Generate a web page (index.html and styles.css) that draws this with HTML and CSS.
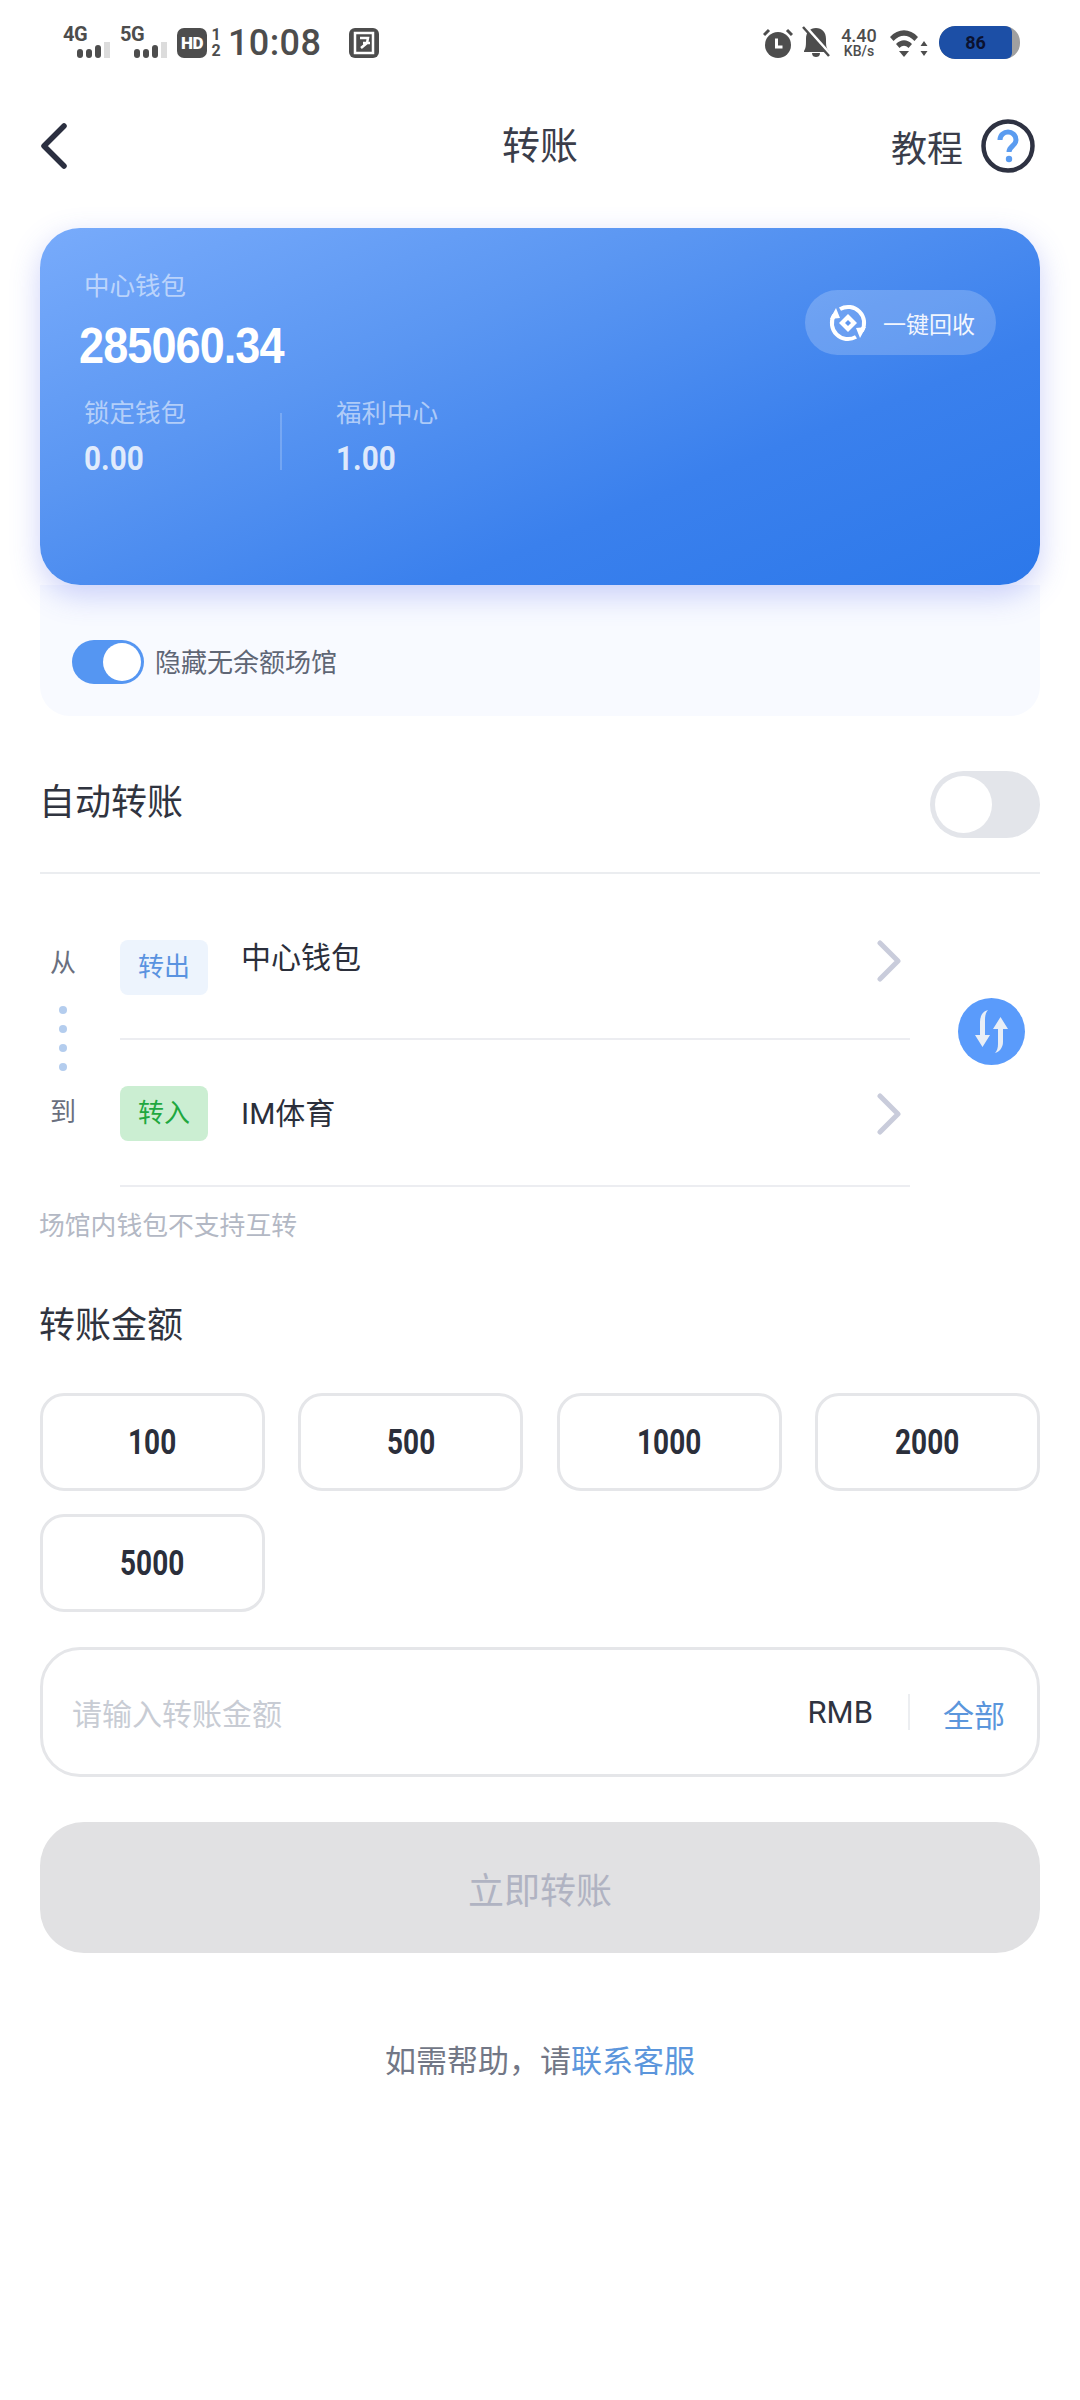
FILE: index.html
```html
<!DOCTYPE html>
<html lang="zh-CN">

<head>
    <meta charset="UTF-8">
    <meta name="viewport" content="width=device-width, initial-scale=1.0">
    <title>转账</title>
    <link rel="stylesheet" href="styles.css">
</head>

<body>
    <!-- status bar -->
    <div class="status">
        <div class="status_left">
            <div class="signal"><span class="signal_name">4G</span><span class="bars"><i></i><i></i><i></i><i class="off"></i></span></div>
            <div class="signal"><span class="signal_name">5G</span><span class="bars"><i></i><i></i><i></i><i class="off"></i></span></div>
            <span class="hd">HD</span>
            <span class="sim"><b>1</b><b>2</b></span>
            <span class="clock">10:08</span>
            <svg class="box_icon" width="30" height="30" viewBox="0 0 30 30">
                <rect width="30" height="30" rx="6" fill="#4d4d4d" />
                <rect x="6" y="5" width="18" height="20" fill="none" stroke="#fff" stroke-width="2.5" />
                <path d="M11 10h8l-1 5-6 5M14 15h7" fill="none" stroke="#fff" stroke-width="2.5" />
            </svg>
        </div>
        <div class="status_right">
            <svg class="alarm" width="30" height="30" viewBox="0 0 30 30">
                <circle cx="15" cy="17" r="13" fill="#4d4d4d" />
                <path d="M1 7l5-5M29 7l-5-5" stroke="#4d4d4d" stroke-width="3" />
                <path d="M13.5 10.5v8.5h6" fill="none" stroke="#fff" stroke-width="3" />
            </svg>
            <svg class="bell" width="28" height="32" viewBox="0 0 28 32">
                <path d="M2 25c2-3 2-6 2-12C4 6 8 2 14 2s10 4 10 11c0 6 0 9 3 12v1H2z" fill="#4d4d4d" />
                <path d="M10 27h8c0 3-2 4-4 4s-4-1-4-4z" fill="#4d4d4d" />
                <path d="M3 0l25 28" stroke="#fff" stroke-width="3" />
                <path d="M1 1l26 29" stroke="#4d4d4d" stroke-width="2.5" />
            </svg>
            <div class="speed"><span class="speed_num">4.40</span><span class="speed_unit">KB/s</span></div>
            <svg class="wifi" width="38" height="30" viewBox="0 0 38 30">
                <path d="M0 9C8 0 20 0 28 9l-3.500 4C18 6 10 6 3.500 13z" fill="#4d4d4d" />
                <path d="M6 16c5-5 11-5 16 0l-3.500 4c-3-3-6-3-9 0z" fill="#4d4d4d" />
                <path d="M9 23h10l-5 6z" fill="#4d4d4d" />
                <path d="M34 13l3.500 5h-7zM34 28l3.500-5h-7z" fill="#4d4d4d" />
            </svg>
            <div class="battery"><span class="battery_num">86</span></div>
        </div>
    </div>

    <!-- title -->
    <div class="nav">
        <svg class="nav_back" width="28" height="46" viewBox="0 0 28 46">
            <path d="M24 3L4 23l20 20" fill="none" stroke="#2b2f40" stroke-width="5.500" stroke-linecap="round" stroke-linejoin="round" />
        </svg>
        <h1 class="nav_title">转账</h1>
        <div class="nav_help">
            <span>教程</span>
            <svg width="54" height="54" viewBox="0 0 54 54">
                <circle cx="27" cy="27" r="24.500" fill="#fff" stroke="#2e3242" stroke-width="4.500" />
                <path d="M19 21c0-5 4-8 8-8s8 3 8 8c0 6-7 6-7 12" fill="none" stroke="#5b9cf0" stroke-width="5" />
                <circle cx="28" cy="40" r="3.200" fill="#5b9cf0" />
            </svg>
        </div>
    </div>

    <div class="main">
        <!-- wallet card -->
        <div class="card">
            <div class="card_top">
                <div>
                    <div class="card_label">中心钱包</div>
                    <div class="card_amount">285060.34</div>
                </div>
                <div class="recycle">
                    <svg width="38" height="38" viewBox="0 0 38 38">
                        <path d="M11 5.100A16 16 0 0 1 32.900 27M27 32.900A16 16 0 0 1 5.100 11" fill="none" stroke="#fff" stroke-width="4" />
                        <path d="M27 24l10-1-6 11zM11 14L1 15 7 4z" fill="#fff" />
                        <path d="M19 10l9 9-9 9-9-9z" fill="#fff" />
                        <path d="M19 16l3 3-3 3-3-3z" fill="#5f97ef" />
                    </svg>
                    <span>一键回收</span>
                </div>
            </div>
            <div class="card_sub">
                <div class="sub_item">
                    <div class="card_label">锁定钱包</div>
                    <div class="sub_value">0.00</div>
                </div>
                <div class="sub_line"></div>
                <div class="sub_item">
                    <div class="card_label">福利中心</div>
                    <div class="sub_value">1.00</div>
                </div>
            </div>
        </div>
        <div class="hide_panel">
            <span class="switch switch_on"></span>
            <span class="hide_text">隐藏无余额场馆</span>
        </div>

        <div class="auto_row">
            <span class="big_label">自动转账</span>
            <span class="switch_off"></span>
        </div>

        <!-- from / to -->
        <div class="route">
            <div class="route_labels">
                <div class="route_word">从</div>
                <div class="dots"><i></i><i></i><i></i><i></i></div>
                <div class="route_word">到</div>
            </div>
            <div class="route_rows">
                <div class="route_row row_from">
                    <span class="tag tag_out">转出</span>
                    <span class="route_name">中心钱包</span>
                    <svg class="route_arrow" width="26" height="42" viewBox="0 0 26 42">
                        <path d="M4 3l18 18L4 39" fill="none" stroke="#c9ccdb" stroke-width="5" stroke-linecap="round" stroke-linejoin="round" />
                    </svg>
                </div>
                <div class="route_row row_to">
                    <span class="tag tag_in">转入</span>
                    <span class="route_name">IM体育</span>
                    <svg class="route_arrow" width="26" height="42" viewBox="0 0 26 42">
                        <path d="M4 3l18 18L4 39" fill="none" stroke="#c9ccdb" stroke-width="5" stroke-linecap="round" stroke-linejoin="round" />
                    </svg>
                </div>
            </div>
            <svg class="swap" width="67" height="67" viewBox="0 0 67 67">
                <circle cx="33.500" cy="33.500" r="33.500" fill="#5a9bfb" />
                <path d="M30 12C25 13 22 18 22 24V37H17L24.500 49 32 37H27V22C27 17 28 14 30 12Z" fill="#e8eef6" />
                <path d="M37 55C41 54 45 50 45 44V31H50L42.500 19 35 31H40V46C40 50 39 53 37 55Z" fill="#e8eef6" />
            </svg>
        </div>
        <div class="note">场馆内钱包不支持互转</div>

        <div class="big_label amount_title">转账金额</div>
        <div class="amounts">
            <div class="amount_btn"><span>100</span></div>
            <div class="amount_btn"><span>500</span></div>
            <div class="amount_btn"><span>1000</span></div>
            <div class="amount_btn"><span>2000</span></div>
            <div class="amount_btn"><span>5000</span></div>
        </div>

        <div class="input_box">
            <span class="input_hint">请输入转账金额</span>
            <span class="input_unit">RMB</span>
            <span class="input_line"></span>
            <span class="input_all">全部</span>
        </div>

        <div class="submit">立即转账</div>
        <div class="help">如需帮助，请<span class="help_link">联系客服</span></div>
    </div>
</body>

</html>
```

FILE: styles.css
```css
* {
    padding: 0;
    margin: 0;
    box-sizing: border-box;
}

body {
    width: 1080px;
    height: 2400px;
    background-color: #fff;
    font-family: Roboto, "Noto Sans CJK SC", sans-serif;
    color: #2f3340;
    overflow: hidden;
}

/* status bar */
.status {
    height: 82px;
    padding: 26px 60px 0 63px;
    display: flex;
    justify-content: space-between;
    color: #4d4d4d;
}

.status_left,
.status_right {
    display: flex;
    align-items: flex-start;
}

.signal {
    width: 47px;
    margin-right: 10px;
    display: flex;
    flex-direction: column;
}

.signal_name {
    font-size: 20px;
    line-height: 16px;
    font-weight: 700;
    letter-spacing: -.5px;
}

.bars {
    display: flex;
    justify-content: flex-end;
    align-items: flex-end;
    gap: 3px;
    height: 16px;
}

.bars i {
    width: 6px;
    height: 9px;
    border-radius: 3px;
    background-color: #4d4d4d;
}

.bars i:nth-child(3) {
    height: 13px;
}

.bars i.off {
    height: 16px;
    border-radius: 0;
    background-color: #dcdcdc;
}

.hd {
    width: 30px;
    height: 30px;
    margin-top: 2px;
    border-radius: 7px;
    background-color: #4d4d4d;
    color: #fff;
    font-size: 17px;
    line-height: 30px;
    font-weight: 900;
    letter-spacing: -.5px;
    text-align: center;
}

.sim {
    width: 12px;
    margin: 1px 6px 0 3px;
    display: flex;
    flex-direction: column;
    font-size: 16px;
    line-height: 16px;
    text-align: center;
}

.clock {
    font-size: 36px;
    line-height: 34px;
    font-weight: 500;
    letter-spacing: .4px;
}

.box_icon {
    margin: 2px 0 0 28px;
}

.status_right svg {
    margin-top: 2px;
}

.status_right .alarm {
    margin-left: 3px;
}

.status_right .bell {
    margin: 0 0 0 9px;
}

.speed {
    width: 36px;
    margin: 1px 11px 0 11px;
    display: flex;
    flex-direction: column;
    align-items: center;
}

.speed_num {
    font-size: 18px;
    line-height: 17px;
    font-weight: 500;
}

.speed_unit {
    font-size: 14px;
    line-height: 15px;
    font-weight: 500;
}

.status_right .wifi {
    margin-left: 2px;
}

.battery {
    width: 81px;
    height: 33px;
    margin-left: 11px;
    border-radius: 16px;
    background-color: #a0a0a0;
    overflow: hidden;
}

.battery_num {
    display: block;
    width: 73px;
    height: 33px;
    border-radius: 16px 6px 6px 16px;
    background-color: #1c4fa6;
    color: #0b1230;
    font-size: 18px;
    line-height: 33px;
    font-weight: 700;
    text-align: center;
}

/* title */
.nav {
    height: 128px;
    padding: 0 45px 0 40px;
    position: relative;
    display: flex;
    align-items: center;
    justify-content: space-between;
}

.nav_title {
    position: absolute;
    left: 0;
    right: 0;
    font-size: 38px;
    line-height: 56px;
    font-weight: 400;
    text-align: center;
    color: #3a3d4a;
}

.nav_help {
    display: flex;
    align-items: center;
    gap: 18px;
    font-size: 36px;
    color: #3a3d4a;
}

.main {
    padding: 18px 40px 0;
}

/* wallet card */
.card {
    height: 357px;
    padding: 38px 44px 0;
    position: relative;
    border-radius: 40px;
    background: linear-gradient(158deg, #78abfb 0%, #5a96f2 35%, #3a80ed 68%, #2c78ea 100%);
    box-shadow: 0 10px 30px rgba(75, 95, 235, .28);
    color: #fff;
}

.card_top {
    display: flex;
    justify-content: space-between;
}

.card_label {
    font-size: 25.5px;
    line-height: 40px;
    color: rgba(255, 255, 255, .55);
}

.card_amount {
    margin: 12px 0 0 -5px;
    font-family: "Liberation Sans", sans-serif;
    font-size: 50px;
    line-height: 56px;
    font-weight: 700;
    letter-spacing: -1px;
    transform: scaleX(.9);
    transform-origin: left;
}

.recycle {
    width: 191px;
    height: 65px;
    margin-top: 24px;
    padding-left: 24px;
    display: flex;
    align-items: center;
    gap: 16px;
    border-radius: 33px;
    background-color: rgba(255, 255, 255, .2);
    font-size: 23px;
    color: #f2f6fe;
}

.card_sub {
    margin-top: 19px;
    display: flex;
    align-items: flex-end;
}

.sub_item {
    width: 196px;
}

.sub_item + .sub_line + .sub_item {
    width: 200px;
    margin-left: 54px;
}

.sub_value {
    margin-top: 7px;
    font-size: 33px;
    line-height: 38px;
    font-weight: 700;
    color: rgba(255, 255, 255, .82);
    transform: scaleX(.9);
    transform-origin: left;
}

.sub_line {
    width: 2px;
    height: 57px;
    margin-bottom: 8px;
    background-color: rgba(255, 255, 255, .2);
}

.hide_panel {
    height: 131px;
    padding: 55px 0 0 32px;
    display: flex;
    align-items: flex-start;
    border-radius: 0 0 30px 30px;
    background-color: #f8faff;
}

.switch {
    width: 72px;
    height: 44px;
    position: relative;
    border-radius: 22px;
    background-color: #5596f2;
}

/* knob of the switch */
.switch_on::after {
    content: "";
    position: absolute;
    right: 3px;
    top: 3px;
    width: 38px;
    height: 38px;
    border-radius: 50%;
    background-color: #fff;
}

.hide_text {
    margin-left: 11px;
    font-size: 26px;
    line-height: 46px;
    color: #5f6675;
}

.auto_row {
    height: 158px;
    padding-top: 55px;
    display: flex;
    justify-content: space-between;
    align-items: flex-start;
    border-bottom: 2px solid #ebedf0;
}

.big_label {
    margin-left: -1px;
    font-size: 36px;
    line-height: 56px;
    color: #30343f;
}

.auto_row .big_label {
    margin-top: 4px;
}

.switch_off {
    width: 110px;
    height: 67px;
    position: relative;
    border-radius: 34px;
    background-color: #e3e5ea;
}

.switch_off::after {
    content: "";
    position: absolute;
    left: 5px;
    top: 5px;
    width: 57px;
    height: 57px;
    border-radius: 50%;
    background-color: #fff;
}

/* from / to */
.route {
    display: flex;
}

.route_labels {
    width: 80px;
    padding-top: 69px;
}

.route_word {
    width: 46px;
    font-size: 26px;
    line-height: 40px;
    text-align: center;
    color: #6a6f7e;
}

.dots {
    width: 46px;
    margin: 23px 0 21px;
    display: flex;
    flex-direction: column;
    align-items: center;
    gap: 11px;
}

.dots i {
    width: 8px;
    height: 8px;
    border-radius: 50%;
    background-color: #b4cdee;
}

.route_rows {
    width: 790px;
}

.route_row {
    display: flex;
    align-items: flex-start;
    border-bottom: 2px solid #ecedf1;
}

.row_from {
    height: 166px;
    padding-top: 66px;
}

.row_to {
    height: 147px;
    padding-top: 46px;
}

.tag {
    width: 88px;
    height: 55px;
    border-radius: 8px;
    font-size: 26px;
    line-height: 55px;
    text-align: center;
}

.tag_out {
    background-color: #edf4fd;
    color: #5a93e0;
}

.tag_in {
    background-color: #cbeed2;
    color: #1fa83f;
}

.route_name {
    margin-left: 33px;
    flex: 1;
    font-size: 30px;
    line-height: 40px;
    color: #2b2f3b;
}

.row_from .route_name {
    margin-top: -2px;
}

.row_to .route_name {
    margin-top: 8px;
}

.route_arrow {
    margin-right: 8px;
}

.row_to .route_arrow {
    margin-top: 7px;
}

.swap {
    margin: 124px 0 0 48px;
}

.note {
    margin-top: 21px;
    margin-left: -1px;
    font-size: 25.8px;
    line-height: 36px;
    color: #b3b8c4;
}

.amount_title {
    margin-top: 54px;
}

.amounts {
    margin-top: 39px;
    display: grid;
    grid-template-columns: repeat(4, 225px);
    column-gap: 33.33px;
    row-gap: 23px;
}

.amount_btn {
    height: 98px;
    display: flex;
    align-items: center;
    justify-content: center;
    border: 3px solid #e5e6e9;
    border-radius: 24px;
    font-size: 35px;
    font-weight: 700;
    color: #2b2f3b;
}

/* number font of the reference is narrower than Roboto */
.amount_btn span {
    display: inline-block;
    transform: scaleX(.8);
}

.input_box {
    height: 130px;
    margin-top: 35px;
    padding: 0 32px 0 29px;
    display: flex;
    align-items: center;
    border: 3px solid #e5e6e9;
    border-radius: 40px;
}

.input_hint {
    flex: 1;
    font-size: 30px;
    color: #c8ccd4;
}

.input_unit {
    font-size: 31px;
    color: #2f3340;
}

.input_line {
    width: 2px;
    height: 36px;
    margin: 0 33px 0 35px;
    background-color: #eceef1;
}

.input_all {
    margin-top: 2px;
    font-size: 31px;
    color: #5b96dc;
}

.submit {
    height: 131px;
    margin-top: 45px;
    border-radius: 44px;
    background-color: #e1e1e3;
    font-size: 36px;
    line-height: 141px;
    text-align: center;
    color: #b0b3c2;
}

.help {
    margin-top: 87px;
    font-size: 31px;
    line-height: 44px;
    text-align: center;
    color: #727786;
}

.help_link {
    color: #5b96dc;
}
```
